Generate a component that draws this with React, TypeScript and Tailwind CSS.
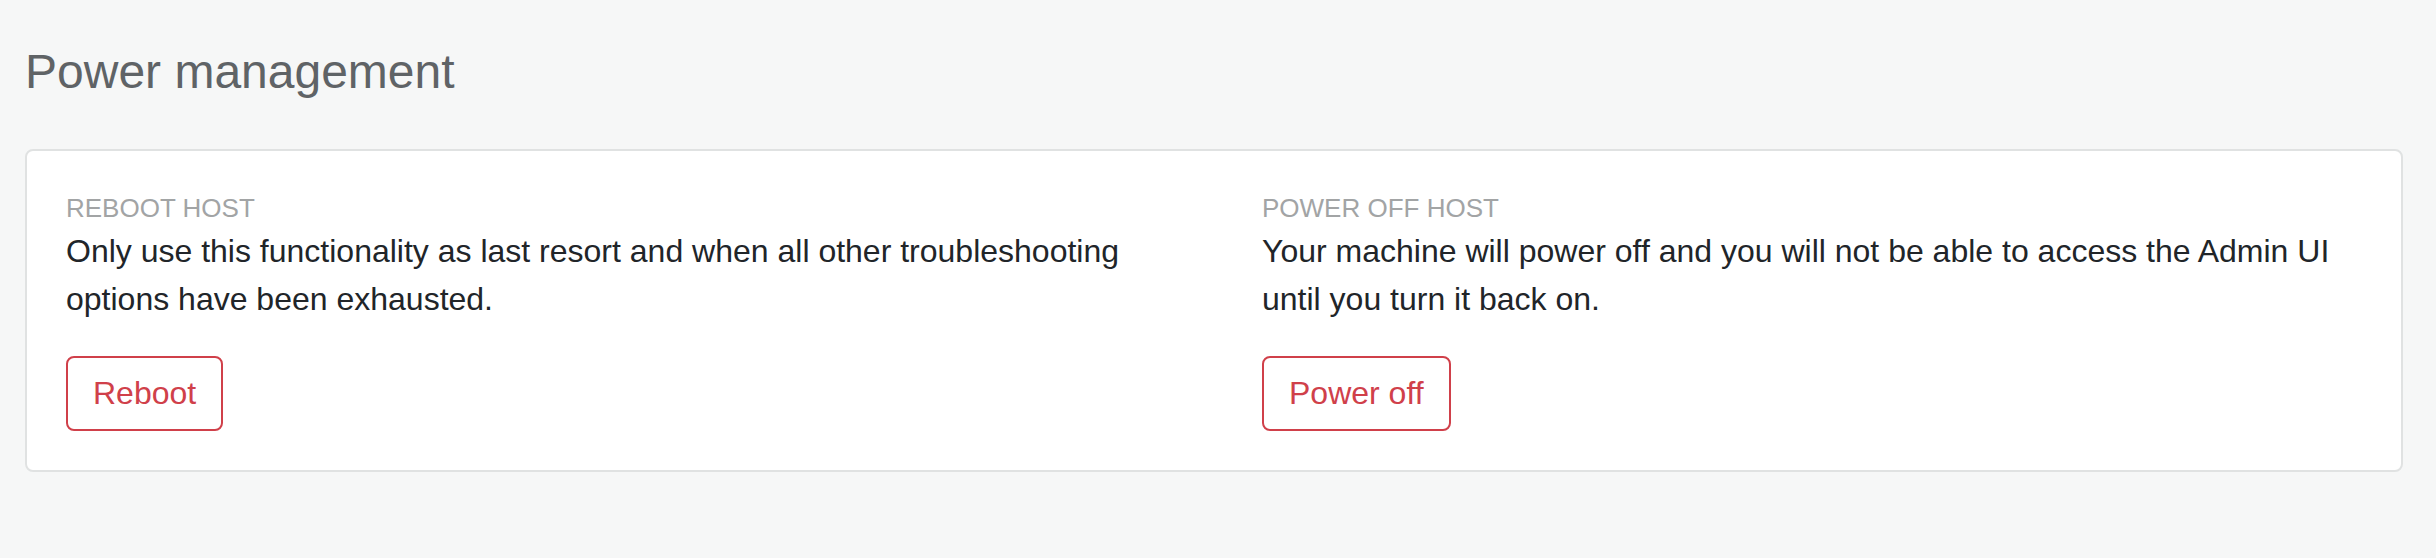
import React from "react";

function Section({ label, text, button }: { label: string; text: string; button: string }) {
  return (
    <div className="flex flex-col items-start">
      <div className="text-[26px] leading-[37px] text-[#a2a4a5] uppercase">{label}</div>
      <p className="text-[32px] leading-[48px] text-[#212529]">{text}</p>
      <button
        type="button"
        className="mt-[33px] h-[75px] px-[25px] border-2 border-[#d0404a] rounded-[8px] bg-white text-[32px] leading-[48px] text-[#d0404a]"
      >
        {button}
      </button>
    </div>
  );
}

export default function App() {
  return (
    <div
      className="min-h-[558px] w-full bg-[#f6f7f7] pl-[25px] pr-[33px] pt-[43px]"
      style={{ fontFamily: '"Liberation Sans", Arial, sans-serif' }}
    >
      <h2 className="text-[48px] leading-[57.6px] text-[#5f6366] font-normal">Power management</h2>
      <div className="mt-[48px] bg-white border-2 border-[#e0e2e2] rounded-[8px] px-[39px] pt-[39px] pb-[39px]">
        <div className="grid grid-cols-2 gap-[96px]">
          <Section
            label="Reboot host"
            text="Only use this functionality as last resort and when all other troubleshooting options have been exhausted."
            button="Reboot"
          />
          <Section
            label="Power off host"
            text="Your machine will power off and you will not be able to access the Admin UI until you turn it back on."
            button="Power off"
          />
        </div>
      </div>
    </div>
  );
}
